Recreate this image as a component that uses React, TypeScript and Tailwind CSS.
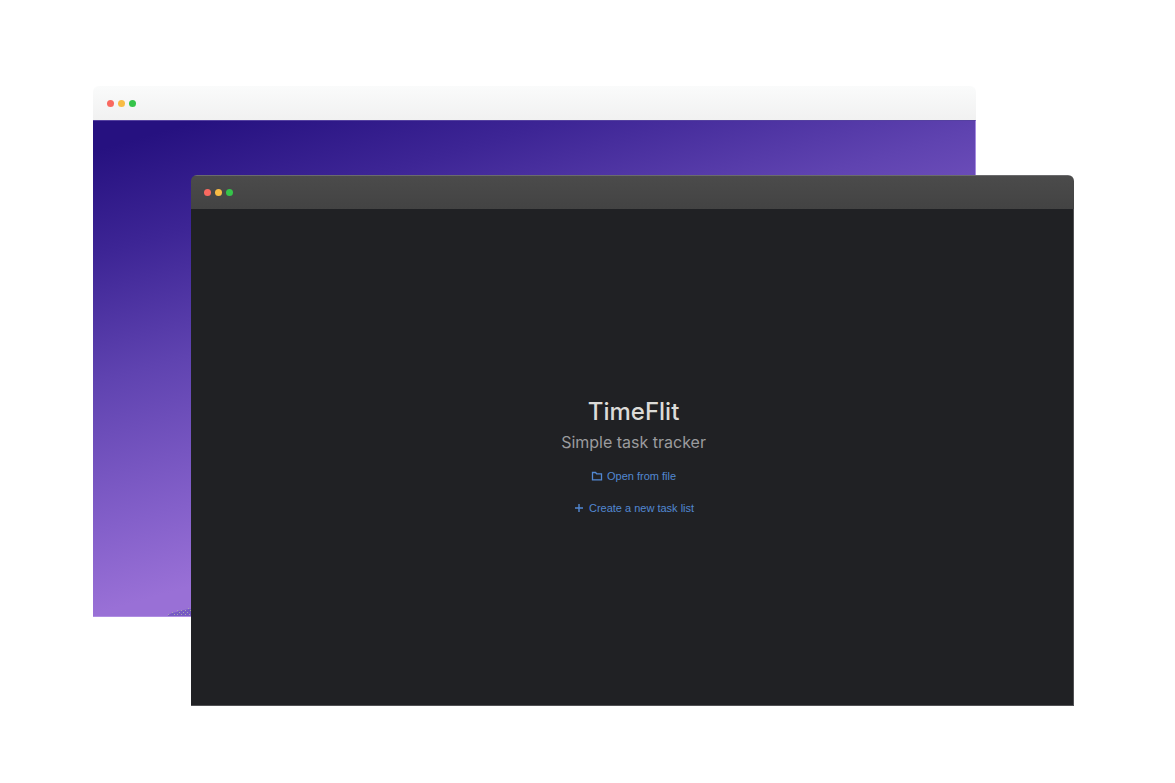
import React from 'react'

type WindowProps = {
  className: string
  barClass: string
  bodyClass: string
  children?: React.ReactNode
}

const TrafficLights = () => (
  <div className="flex gap-1">
    <span className="h-[7px] w-[7px] rounded-full bg-[#f96960]" />
    <span className="h-[7px] w-[7px] rounded-full bg-[#f8bc45]" />
    <span className="h-[7px] w-[7px] rounded-full bg-[#35c44a]" />
  </div>
)

const AppWindow = ({ className, barClass, bodyClass, children }: WindowProps) => (
  <section className={`col-start-1 row-start-1 w-[90%] overflow-hidden rounded-t-md ${className}`}>
    <div className={`flex h-[34px] items-center ${barClass}`}>
      <TrafficLights />
    </div>
    <div className={`aspect-video ${bodyClass}`}>{children}</div>
  </section>
)

const FolderIcon = () => (
  <svg className="h-3 w-3" viewBox="0 0 12 12" fill="none" stroke="currentColor" strokeWidth="1.3" aria-hidden="true">
    <path d="M1.5 2.5h3l1.2 1.3h4.8v6h-9z" />
  </svg>
)

const PlusIcon = () => (
  <svg className="h-3 w-3" viewBox="0 0 12 12" fill="none" stroke="currentColor" strokeWidth="1.4" aria-hidden="true">
    <path d="M6 2v8M2 6h8" />
  </svg>
)

const Welcome = () => (
  <div className="flex h-full flex-col items-center justify-center pt-[3px] pl-[3px]">
    <h1 className="font-['Inter',sans-serif] text-2xl leading-7 font-medium text-[#dcdbd8]">TimeFlit</h1>
    <p className="mt-1 font-['Inter',sans-serif] text-base leading-6 text-[#9b9b9e]">Simple task tracker</p>
    <div className="mt-3 flex flex-col items-center gap-3 font-['Liberation_Sans',Arial,sans-serif] text-[11px] leading-5 text-[#5288d2] [text-shadow:0_0_1px_#5288d2]">
      <button type="button" className="flex cursor-pointer items-center gap-1">
        <FolderIcon />
        Open from file
      </button>
      <button type="button" className="flex cursor-pointer items-center gap-1">
        <PlusIcon />
        Create a new task list
      </button>
    </div>
  </div>
)

const App = () => {
  return (
    <main className="min-h-screen bg-white pt-[86px] pr-[101px] pb-[77px] pl-[93px]">
      {/* both windows share one grid cell, the dark one is shifted down and right */}
      <div className="grid items-start">
        <AppWindow
          className="justify-self-start"
          barClass="px-[14px] bg-linear-to-b from-[#fafbfb] to-[#f1f1f1]"
          bodyClass="relative border-t border-t-[#5541a0] border-r border-r-[#a68ce0] border-b border-b-[#af8de2] bg-[linear-gradient(164deg,#261180_4%,#3d2595_18%,#5f43b0_35%,#8460ca_55%,#9970d6_66%)]"
        >
          <svg className="absolute bottom-0 left-[75px] h-2 w-6" viewBox="0 0 24 8" aria-hidden="true">
            <path d="M0 7l4-2 5-1 2-1 5-1 5-1h3v7H0z" fill="#765bc2" />
            <path
              d="M0 6.5h1M4 4.5h1M9 2.5h1M13 2.5h1M20 .5h1M6 6.5h1M11 4.5h1M15 4.5h1M19 4.5h1M23 4.5h1M9 6.5h1M13 6.5h1M17 6.5h1M21 6.5h1M17 2.5h1M22 2.5h1"
              stroke="#aaa3b0"
            />
          </svg>
        </AppWindow>
        <AppWindow
          className="z-10 mt-[89px] justify-self-end"
          barClass="px-[13px] border-t border-t-[#6b6b6d] bg-linear-to-b from-[#4b4b4b] to-[#434343]"
          bodyClass="border-r border-b border-[#515154] bg-[#202124]"
        >
          <Welcome />
        </AppWindow>
      </div>
    </main>
  )
}

export default App
